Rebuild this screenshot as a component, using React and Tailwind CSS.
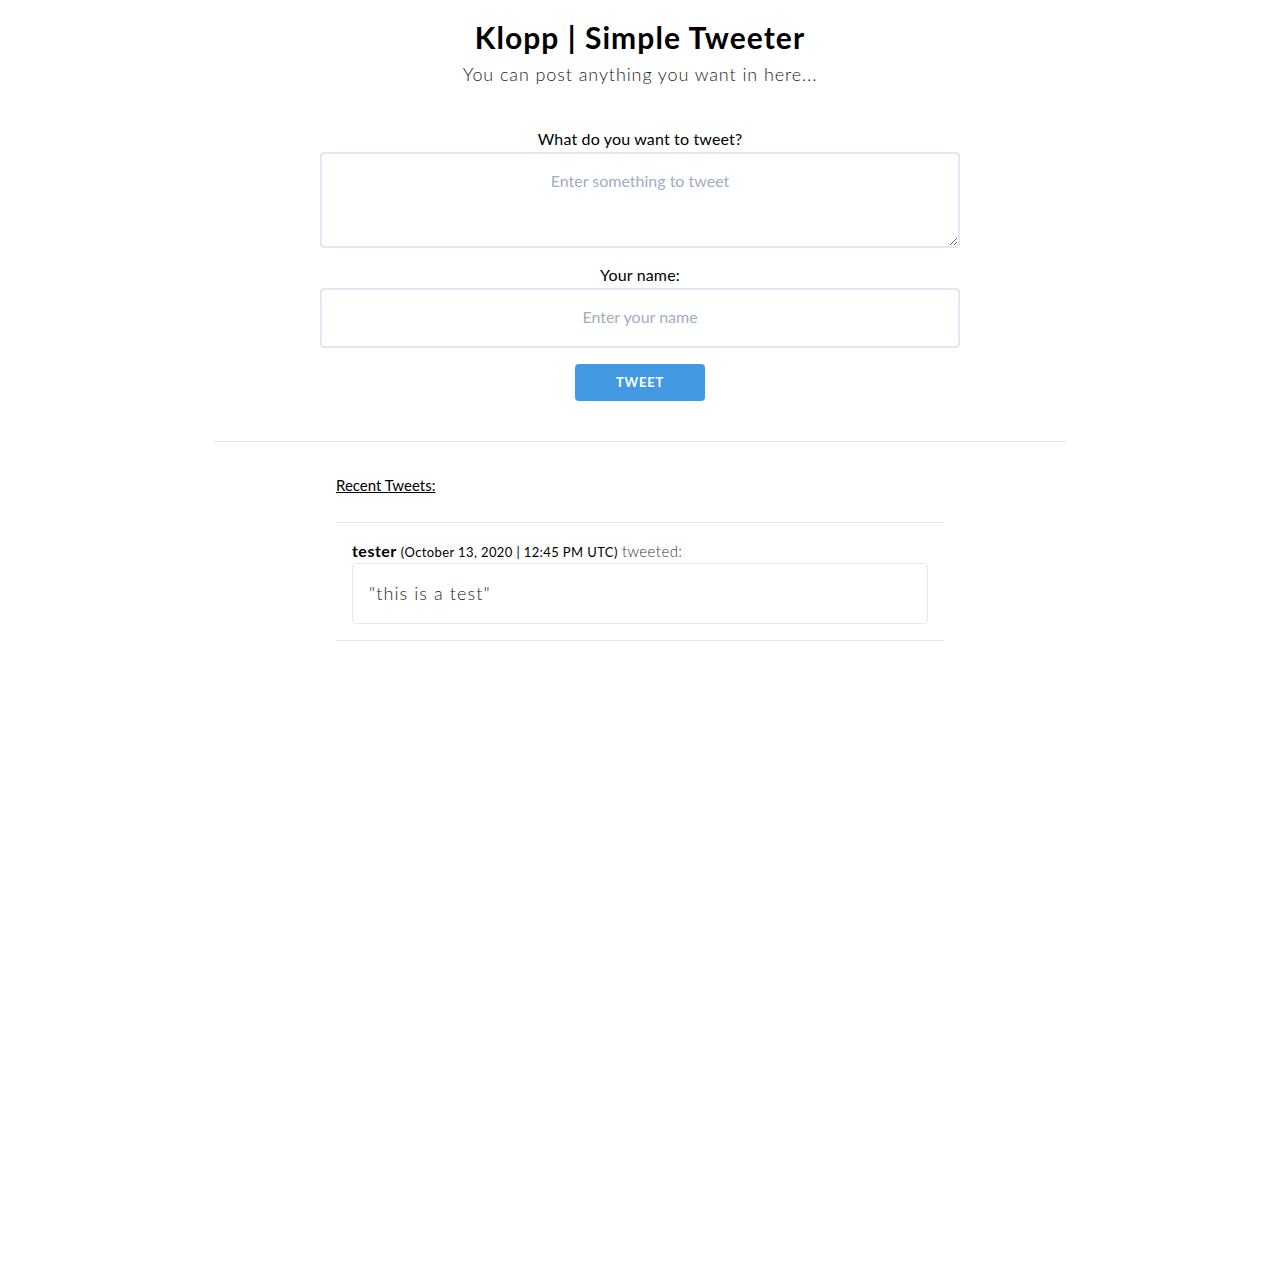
import React from 'react';

const tweets = [
  { name: 'tester', date: 'October 13, 2020 | 12:45 PM UTC', text: 'this is a test' },
];

const App = () => {
  return (
    <div className="min-h-screen bg-white text-black font-['Lato','Open_Sans',sans-serif]">
      <div className="mx-auto w-[854px] pt-[19px]">
        <header className="text-center">
          <h1 className="text-[30px] font-bold leading-[36px] tracking-[0.035em]">Klopp | Simple Tweeter</h1>
          <p className="mt-[6px] text-[18px] font-light leading-[26px] tracking-[0.05em] text-[#222]">
            You can post anything you want in here...
          </p>
        </header>

        <form className="mx-auto mt-[40px] flex w-[640px] flex-col items-center" onSubmit={(e) => e.preventDefault()}>
          <label className="text-[16px] leading-[24px] tracking-[0.01em]">What do you want to tweet?</label>
          <textarea
            className="mt-[1px] h-[96px] w-full rounded border-2 border-[#e2e8f0] px-4 pt-[16px] text-center text-[16px] leading-[22px] placeholder:text-[#a0aec0] outline-none"
            placeholder="Enter something to tweet"
          />
          <label className="mt-[15px] text-[16px] leading-[24px] tracking-[0.01em]">Your name:</label>
          <input
            className="mt-[1px] h-[60px] w-full rounded border-2 border-[#e2e8f0] px-4 pb-[4px] text-center text-[16px] placeholder:text-[#a0aec0] outline-none"
            placeholder="Enter your name"
          />
          <button
            type="submit"
            className="mt-[16px] h-[37px] w-[130px] rounded bg-[#4299e1] text-[13px] font-bold tracking-[0.06em] text-white"
          >
            TWEET
          </button>
        </form>

        <hr className="mt-[40px] border-t border-[#e2e8f0]" />

        <section className="mx-auto w-[608px] pt-[33px]">
          <h2 className="text-[15px] leading-[20px] underline">Recent Tweets:</h2>
          <ul className="mt-[27px] border-t border-[#e2e8f0]">
            {tweets.map((t, i) => (
              <li key={i} className="border-b border-[#e2e8f0] px-4 pt-[17px] pb-[16px]">
                <div className="leading-[22px]">
                  <span className="text-[16px] font-bold tracking-[0.03em]">{t.name}</span>{' '}
                  <span className="text-[13px] tracking-[0.03em]">({t.date})</span>{' '}
                  <span className="text-[15px] font-light tracking-[0.03em] text-[#333]">tweeted:</span>
                </div>
                <div className="flex h-[61px] items-center rounded border border-[#e2e8f0] px-4">
                  <p className="text-[18px] font-light tracking-[0.06em] text-[#222]">"{t.text}"</p>
                </div>
              </li>
            ))}
          </ul>
        </section>
      </div>
    </div>
  );
};

export default App;
